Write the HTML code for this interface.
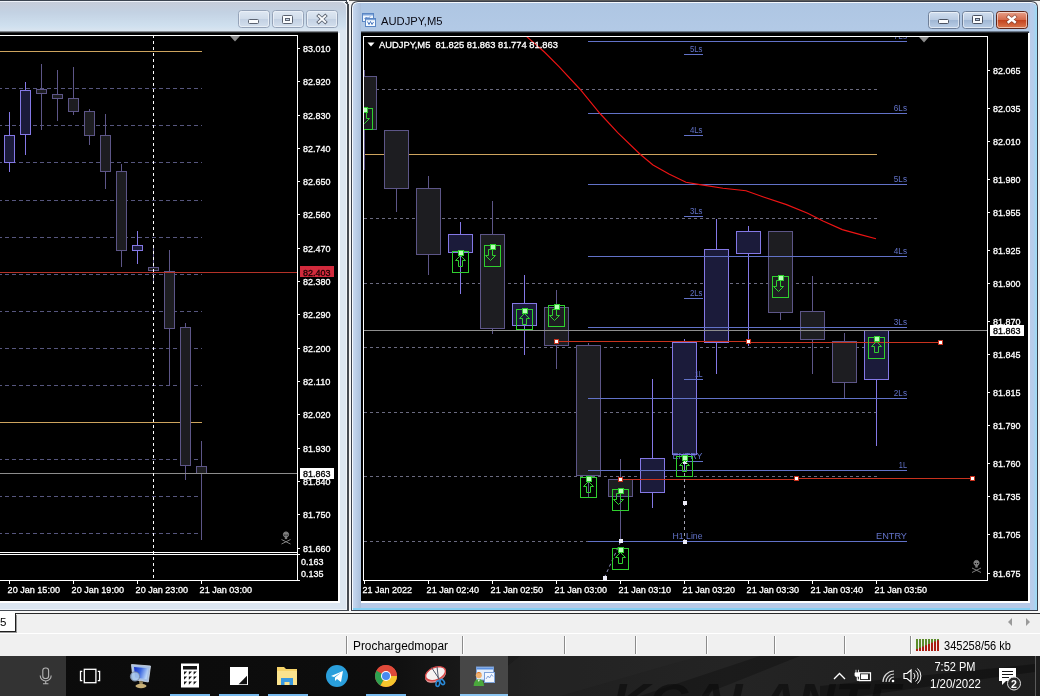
<!DOCTYPE html>
<html><head><meta charset="utf-8"><title>AUDJPY,M5</title>
<style>html,body{margin:0;padding:0;background:#000;overflow:hidden}svg{display:block;will-change:transform}</style></head>
<body>
<svg width="1040" height="696" viewBox="0 0 1040 696" shape-rendering="crispEdges" font-family='"Liberation Sans", sans-serif'>
<defs>
<linearGradient id="tbL" x1="0" y1="0" x2="0" y2="1"><stop offset="0" stop-color="#c6ccd9"/><stop offset="0.35" stop-color="#c3d2e3"/><stop offset="0.8" stop-color="#cfe0ef"/><stop offset="1" stop-color="#dde6f0"/></linearGradient>
<linearGradient id="tbR" x1="0" y1="0" x2="0" y2="1"><stop offset="0" stop-color="#aec6e3"/><stop offset="0.12" stop-color="#bacfea"/><stop offset="0.5" stop-color="#b4cbe8"/><stop offset="1" stop-color="#a8c0e0"/></linearGradient>
<linearGradient id="btnL" x1="0" y1="0" x2="0" y2="1"><stop offset="0" stop-color="#dfe8f3"/><stop offset="0.5" stop-color="#d0dcea"/><stop offset="0.5" stop-color="#c2d0e2"/><stop offset="1" stop-color="#d4e0ee"/></linearGradient>
<linearGradient id="btnR" x1="0" y1="0" x2="0" y2="1"><stop offset="0" stop-color="#d3e0f0"/><stop offset="0.5" stop-color="#b9cbe2"/><stop offset="0.5" stop-color="#9fb6d3"/><stop offset="1" stop-color="#bcd0e8"/></linearGradient>
<linearGradient id="btnX" x1="0" y1="0" x2="0" y2="1"><stop offset="0" stop-color="#e8a48e"/><stop offset="0.5" stop-color="#d4694a"/><stop offset="0.5" stop-color="#c2411c"/><stop offset="1" stop-color="#dc7a50"/></linearGradient>
<linearGradient id="sideR" gradientUnits="userSpaceOnUse" x1="353" y1="0" x2="361" y2="0"><stop offset="0" stop-color="#c6d7ef"/><stop offset="1" stop-color="#aabfdb"/></linearGradient>
<linearGradient id="tbShadow" x1="0" y1="0" x2="0" y2="1"><stop offset="0" stop-color="#000" stop-opacity="0"/><stop offset="1" stop-color="#000" stop-opacity="1"/></linearGradient>
</defs>
<rect x="0" y="0" width="1040" height="614" fill="#f4f4f4" />
<path d="M-10 0 H342 Q349 0 349 7 V611 H-10 Z" fill="#454a52"/>
<path d="M-10 1 H341 Q347 1 347 7 V610 H-10 Z" fill="#eef3f9"/>
<path d="M-10 2 H340 Q346 2 346 8 V609 H-10 Z" fill="#dce6f1"/>
<clipPath id="cl"><path d="M-10 2 H340 Q346 2 346 8 V609 H-10 Z"/></clipPath>
<rect x="-10" y="2" width="357" height="30" fill="url(#tbL)" clip-path="url(#cl)"/>
<rect x="340" y="30" width="6" height="579" fill="#dce6f1" />
<line x1="0" y1="0.5" x2="347" y2="0.5" stroke="#3c4450" stroke-width="1" />
<line x1="0" y1="1.5" x2="346" y2="1.5" stroke="#eef2f9" stroke-width="1" />
<rect x="0" y="30.5" width="338" height="2.5" fill="url(#tbShadow)" shape-rendering="auto"/>
<rect x="-10" y="33" width="350" height="570" fill="#fff" />
<rect x="-10" y="33" width="348" height="568" fill="#000" />
<rect x="238.5" y="10.5" width="31" height="17" rx="3" fill="url(#btnL)" stroke="#95a3b8" shape-rendering="auto"/>
<rect x="239.5" y="11.5" width="29" height="15" rx="2" fill="none" stroke="#eef3f9" stroke-opacity="0.8" shape-rendering="auto"/>
<rect x="272.5" y="10.5" width="31" height="17" rx="3" fill="url(#btnL)" stroke="#95a3b8" shape-rendering="auto"/>
<rect x="273.5" y="11.5" width="29" height="15" rx="2" fill="none" stroke="#eef3f9" stroke-opacity="0.8" shape-rendering="auto"/>
<rect x="306.5" y="10.5" width="31" height="17" rx="3" fill="url(#btnL)" stroke="#95a3b8" shape-rendering="auto"/>
<rect x="307.5" y="11.5" width="29" height="15" rx="2" fill="none" stroke="#eef3f9" stroke-opacity="0.8" shape-rendering="auto"/>
<rect x="248.5" y="19.5" width="10" height="4" rx="1" fill="#fafcfe" stroke="#5a6270" shape-rendering="auto"/>
<rect x="282.5" y="15.5" width="10" height="8" rx="1" fill="#fafcfe" stroke="#5a6270" shape-rendering="auto"/>
<rect x="285.5" y="18.5" width="4" height="2" fill="#c9d6e6" stroke="#5a6270" shape-rendering="auto"/>
<g shape-rendering="auto" stroke-linecap="square"><path d="M318.8 16 l6.4 6 M325.2 16 l-6.4 6" stroke="#5a6270" stroke-width="3.6" fill="none"/><path d="M318.8 16 l6.4 6 M325.2 16 l-6.4 6" stroke="#fafcfe" stroke-width="1.9" fill="none"/></g>
<line x1="0" y1="35.5" x2="298" y2="35.5" stroke="#fff" stroke-width="1" />
<line x1="297.5" y1="35" x2="297.5" y2="581" stroke="#fff" stroke-width="1" />
<line x1="0" y1="552.5" x2="298" y2="552.5" stroke="#fff" stroke-width="1" />
<line x1="0" y1="554.5" x2="298" y2="554.5" stroke="#fff" stroke-width="1" />
<line x1="0" y1="580.5" x2="298" y2="580.5" stroke="#fff" stroke-width="1" />
<line x1="298" y1="554.5" x2="300" y2="554.5" stroke="#fff" stroke-width="1" />
<line x1="298" y1="580.5" x2="300" y2="580.5" stroke="#fff" stroke-width="1" />
<path d="M230 36 h10 l-5 5.5 z" fill="#8c8c8c" shape-rendering="auto"/>
<line x1="0" y1="88.5" x2="202" y2="88.5" stroke="#56567e" stroke-width="1" stroke-dasharray="4 3" stroke-dashoffset="2"/>
<line x1="0" y1="125.5" x2="202" y2="125.5" stroke="#56567e" stroke-width="1" stroke-dasharray="4 3" stroke-dashoffset="2"/>
<line x1="0" y1="162.5" x2="202" y2="162.5" stroke="#56567e" stroke-width="1" stroke-dasharray="4 3" stroke-dashoffset="2"/>
<line x1="0" y1="200.5" x2="202" y2="200.5" stroke="#56567e" stroke-width="1" stroke-dasharray="4 3" stroke-dashoffset="2"/>
<line x1="0" y1="237.5" x2="202" y2="237.5" stroke="#56567e" stroke-width="1" stroke-dasharray="4 3" stroke-dashoffset="2"/>
<line x1="0" y1="274.5" x2="202" y2="274.5" stroke="#56567e" stroke-width="1" stroke-dasharray="4 3" stroke-dashoffset="2"/>
<line x1="0" y1="311.5" x2="202" y2="311.5" stroke="#56567e" stroke-width="1" stroke-dasharray="4 3" stroke-dashoffset="2"/>
<line x1="0" y1="348.5" x2="202" y2="348.5" stroke="#56567e" stroke-width="1" stroke-dasharray="4 3" stroke-dashoffset="2"/>
<line x1="0" y1="385.5" x2="202" y2="385.5" stroke="#56567e" stroke-width="1" stroke-dasharray="4 3" stroke-dashoffset="2"/>
<line x1="0" y1="459.5" x2="202" y2="459.5" stroke="#56567e" stroke-width="1" stroke-dasharray="4 3" stroke-dashoffset="2"/>
<line x1="0" y1="496.5" x2="202" y2="496.5" stroke="#56567e" stroke-width="1" stroke-dasharray="4 3" stroke-dashoffset="2"/>
<line x1="0" y1="533.5" x2="202" y2="533.5" stroke="#56567e" stroke-width="1" stroke-dasharray="4 3" stroke-dashoffset="2"/>
<line x1="0" y1="51.5" x2="202" y2="51.5" stroke="#cda45e" stroke-width="1" />
<line x1="0" y1="422.5" x2="202" y2="422.5" stroke="#cda45e" stroke-width="1" />
<rect x="9.0" y="112" width="1" height="23" fill="#8478e6"/>
<rect x="9.0" y="163" width="1" height="9" fill="#8478e6"/>
<rect x="4.5" y="135.5" width="10.0" height="27" fill="#1b1b3a" stroke="#8478e6"/>
<rect x="25.0" y="82" width="1" height="8" fill="#8478e6"/>
<rect x="25.0" y="135" width="1" height="20" fill="#8478e6"/>
<rect x="20.5" y="90.5" width="10.0" height="44" fill="#1b1b3a" stroke="#8478e6"/>
<rect x="41.0" y="64" width="1" height="25" fill="#5d5688"/>
<rect x="41.0" y="94" width="1" height="36" fill="#5d5688"/>
<rect x="36.5" y="89.5" width="10.0" height="4" fill="#1d1d21" stroke="#5d5688"/>
<rect x="57.0" y="70" width="1" height="24" fill="#5d5688"/>
<rect x="57.0" y="99" width="1" height="22" fill="#5d5688"/>
<rect x="52.5" y="94.5" width="10.0" height="4" fill="#1d1d21" stroke="#5d5688"/>
<rect x="73.0" y="67" width="1" height="31" fill="#5d5688"/>
<rect x="73.0" y="112" width="1" height="3" fill="#5d5688"/>
<rect x="68.5" y="98.5" width="10.0" height="13" fill="#1d1d21" stroke="#5d5688"/>
<rect x="89.0" y="109" width="1" height="2" fill="#5d5688"/>
<rect x="89.0" y="136" width="1" height="9" fill="#5d5688"/>
<rect x="84.5" y="111.5" width="10.0" height="24" fill="#1d1d21" stroke="#5d5688"/>
<rect x="105.0" y="114" width="1" height="21" fill="#5d5688"/>
<rect x="105.0" y="172" width="1" height="17" fill="#5d5688"/>
<rect x="100.5" y="135.5" width="10.0" height="36" fill="#1d1d21" stroke="#5d5688"/>
<rect x="121.0" y="164" width="1" height="7" fill="#5d5688"/>
<rect x="121.0" y="251" width="1" height="16" fill="#5d5688"/>
<rect x="116.5" y="171.5" width="10.0" height="79" fill="#1d1d21" stroke="#5d5688"/>
<rect x="137.0" y="231" width="1" height="14" fill="#8478e6"/>
<rect x="137.0" y="251" width="1" height="13" fill="#8478e6"/>
<rect x="132.5" y="245.5" width="10.0" height="5" fill="#1b1b3a" stroke="#8478e6"/>
<rect x="153.0" y="245" width="1" height="22" fill="#5d5688"/>
<rect x="153.0" y="271" width="1" height="13" fill="#5d5688"/>
<rect x="148.5" y="267.5" width="10.0" height="3" fill="#1d1d21" stroke="#5d5688"/>
<rect x="169.0" y="250" width="1" height="21" fill="#5d5688"/>
<rect x="169.0" y="329" width="1" height="57" fill="#5d5688"/>
<rect x="164.5" y="271.5" width="10.0" height="57" fill="#1d1d21" stroke="#5d5688"/>
<rect x="185.0" y="323" width="1" height="4" fill="#5d5688"/>
<rect x="185.0" y="466" width="1" height="14" fill="#5d5688"/>
<rect x="180.5" y="327.5" width="10.0" height="138" fill="#1d1d21" stroke="#5d5688"/>
<rect x="201.0" y="441" width="1" height="25" fill="#5d5688"/>
<rect x="201.0" y="474" width="1" height="66" fill="#5d5688"/>
<rect x="196.5" y="466.5" width="10.0" height="7" fill="#1d1d21" stroke="#5d5688"/>
<line x1="0" y1="272.5" x2="297" y2="272.5" stroke="#b43228" stroke-width="1" />
<line x1="0" y1="473.5" x2="297" y2="473.5" stroke="#8c8c8c" stroke-width="1" />
<line x1="153.5" y1="35" x2="153.5" y2="580" stroke="#fff" stroke-width="1" stroke-dasharray="3 3"/>
<line x1="298" y1="48.5" x2="300" y2="48.5" stroke="#fff" stroke-width="1" />
<text x="303" y="51.5" font-size="9.2" fill="#fff" text-anchor="start" textLength="27.5" lengthAdjust="spacingAndGlyphs"  stroke="#fff" stroke-width="0.3">83.010</text>
<line x1="298" y1="81.5" x2="300" y2="81.5" stroke="#fff" stroke-width="1" />
<text x="303" y="84.5" font-size="9.2" fill="#fff" text-anchor="start" textLength="27.5" lengthAdjust="spacingAndGlyphs"  stroke="#fff" stroke-width="0.3">82.920</text>
<line x1="298" y1="115.5" x2="300" y2="115.5" stroke="#fff" stroke-width="1" />
<text x="303" y="118.5" font-size="9.2" fill="#fff" text-anchor="start" textLength="27.5" lengthAdjust="spacingAndGlyphs"  stroke="#fff" stroke-width="0.3">82.830</text>
<line x1="298" y1="148.5" x2="300" y2="148.5" stroke="#fff" stroke-width="1" />
<text x="303" y="151.5" font-size="9.2" fill="#fff" text-anchor="start" textLength="27.5" lengthAdjust="spacingAndGlyphs"  stroke="#fff" stroke-width="0.3">82.740</text>
<line x1="298" y1="181.5" x2="300" y2="181.5" stroke="#fff" stroke-width="1" />
<text x="303" y="184.5" font-size="9.2" fill="#fff" text-anchor="start" textLength="27.5" lengthAdjust="spacingAndGlyphs"  stroke="#fff" stroke-width="0.3">82.650</text>
<line x1="298" y1="214.5" x2="300" y2="214.5" stroke="#fff" stroke-width="1" />
<text x="303" y="217.5" font-size="9.2" fill="#fff" text-anchor="start" textLength="27.5" lengthAdjust="spacingAndGlyphs"  stroke="#fff" stroke-width="0.3">82.560</text>
<line x1="298" y1="248.5" x2="300" y2="248.5" stroke="#fff" stroke-width="1" />
<text x="303" y="251.5" font-size="9.2" fill="#fff" text-anchor="start" textLength="27.5" lengthAdjust="spacingAndGlyphs"  stroke="#fff" stroke-width="0.3">82.470</text>
<line x1="298" y1="281.5" x2="300" y2="281.5" stroke="#fff" stroke-width="1" />
<text x="303" y="284.5" font-size="9.2" fill="#fff" text-anchor="start" textLength="27.5" lengthAdjust="spacingAndGlyphs"  stroke="#fff" stroke-width="0.3">82.380</text>
<line x1="298" y1="314.5" x2="300" y2="314.5" stroke="#fff" stroke-width="1" />
<text x="303" y="317.5" font-size="9.2" fill="#fff" text-anchor="start" textLength="27.5" lengthAdjust="spacingAndGlyphs"  stroke="#fff" stroke-width="0.3">82.290</text>
<line x1="298" y1="348.5" x2="300" y2="348.5" stroke="#fff" stroke-width="1" />
<text x="303" y="351.5" font-size="9.2" fill="#fff" text-anchor="start" textLength="27.5" lengthAdjust="spacingAndGlyphs"  stroke="#fff" stroke-width="0.3">82.200</text>
<line x1="298" y1="381.5" x2="300" y2="381.5" stroke="#fff" stroke-width="1" />
<text x="303" y="384.5" font-size="9.2" fill="#fff" text-anchor="start" textLength="27.5" lengthAdjust="spacingAndGlyphs"  stroke="#fff" stroke-width="0.3">82.110</text>
<line x1="298" y1="414.5" x2="300" y2="414.5" stroke="#fff" stroke-width="1" />
<text x="303" y="417.5" font-size="9.2" fill="#fff" text-anchor="start" textLength="27.5" lengthAdjust="spacingAndGlyphs"  stroke="#fff" stroke-width="0.3">82.020</text>
<line x1="298" y1="448.5" x2="300" y2="448.5" stroke="#fff" stroke-width="1" />
<text x="303" y="451.5" font-size="9.2" fill="#fff" text-anchor="start" textLength="27.5" lengthAdjust="spacingAndGlyphs"  stroke="#fff" stroke-width="0.3">81.930</text>
<line x1="298" y1="481.5" x2="300" y2="481.5" stroke="#fff" stroke-width="1" />
<text x="303" y="484.5" font-size="9.2" fill="#fff" text-anchor="start" textLength="27.5" lengthAdjust="spacingAndGlyphs"  stroke="#fff" stroke-width="0.3">81.840</text>
<line x1="298" y1="514.5" x2="300" y2="514.5" stroke="#fff" stroke-width="1" />
<text x="303" y="517.5" font-size="9.2" fill="#fff" text-anchor="start" textLength="27.5" lengthAdjust="spacingAndGlyphs"  stroke="#fff" stroke-width="0.3">81.750</text>
<line x1="298" y1="548.5" x2="300" y2="548.5" stroke="#fff" stroke-width="1" />
<text x="303" y="551.5" font-size="9.2" fill="#fff" text-anchor="start" textLength="27.5" lengthAdjust="spacingAndGlyphs"  stroke="#fff" stroke-width="0.3">81.660</text>
<rect x="300" y="266" width="34" height="11" fill="#d22a3c" />
<text x="303" y="275.5" font-size="9.2" fill="#1a0000" text-anchor="start" textLength="27.5" lengthAdjust="spacingAndGlyphs"  stroke="#1a0000" stroke-width="0.3">82.403</text>
<rect x="300" y="468" width="34" height="11" fill="#fff" />
<text x="303" y="476.5" font-size="9.2" fill="#000" text-anchor="start" textLength="27.5" lengthAdjust="spacingAndGlyphs"  stroke="#000" stroke-width="0.3">81.863</text>
<text x="301" y="565" font-size="9.2" fill="#fff" text-anchor="start" textLength="22.5" lengthAdjust="spacingAndGlyphs"  stroke="#fff" stroke-width="0.3">0.163</text>
<text x="301" y="577" font-size="9.2" fill="#fff" text-anchor="start" textLength="22.5" lengthAdjust="spacingAndGlyphs"  stroke="#fff" stroke-width="0.3">0.135</text>
<line x1="9.5" y1="580" x2="9.5" y2="584" stroke="#fff" stroke-width="1" />
<text x="7.6" y="593" font-size="9.2" fill="#fff" text-anchor="start" textLength="52.4" lengthAdjust="spacingAndGlyphs"  stroke="#fff" stroke-width="0.3">20 Jan 15:00</text>
<line x1="73.5" y1="580" x2="73.5" y2="584" stroke="#fff" stroke-width="1" />
<text x="71.6" y="593" font-size="9.2" fill="#fff" text-anchor="start" textLength="52.4" lengthAdjust="spacingAndGlyphs"  stroke="#fff" stroke-width="0.3">20 Jan 19:00</text>
<line x1="137.5" y1="580" x2="137.5" y2="584" stroke="#fff" stroke-width="1" />
<text x="135.6" y="593" font-size="9.2" fill="#fff" text-anchor="start" textLength="52.4" lengthAdjust="spacingAndGlyphs"  stroke="#fff" stroke-width="0.3">20 Jan 23:00</text>
<line x1="201.5" y1="580" x2="201.5" y2="584" stroke="#fff" stroke-width="1" />
<text x="199.6" y="593" font-size="9.2" fill="#fff" text-anchor="start" textLength="52.4" lengthAdjust="spacingAndGlyphs"  stroke="#fff" stroke-width="0.3">21 Jan 03:00</text>
<g fill="none" stroke="#7e7e7e" shape-rendering="auto"><circle cx="286.0" cy="534.5" r="2.6" fill="#7e7e7e"/><rect x="284.8" y="536.5" width="2.4" height="2.6" fill="#7e7e7e" stroke="none"/><path d="M281.5 539.5 l9 4.5 M290.5 539.5 l-9 4.5"/></g>
<circle cx="284.9" cy="535.1" r="0.7" fill="#000" shape-rendering="auto"/><circle cx="287.1" cy="535.1" r="0.7" fill="#000" shape-rendering="auto"/>
<line x1="349" y1="0.5" x2="1040" y2="0.5" stroke="#5a5a5a" stroke-width="1" />
<path d="M351 611 V8 Q351 1 358 1 H1031 Q1038 1 1038 8 V611 Z" fill="#3a3f4a" shape-rendering="auto"/>
<path d="M352 610 V8 Q352 2 358 2 H1031 Q1037 2 1037 8 V610 Z" fill="#f4f8fd" shape-rendering="auto"/>
<path d="M353 610 V9 Q353 3 359 3 H1030 Q1037 3 1037 9 V610 Z" fill="url(#tbR)" shape-rendering="auto"/>
<rect x="353" y="32" width="684" height="578" fill="#b6c9e7" />
<clipPath id="cw"><path d="M353 610 V9 Q353 3 359 3 H1030 Q1037 3 1037 9 V610 Z"/></clipPath>
<rect x="353" y="2" width="8" height="608" fill="url(#sideR)" clip-path="url(#cw)"/>
<rect x="353" y="608" width="684" height="2" fill="#86d0f4" />
<linearGradient id="sideRR" gradientUnits="userSpaceOnUse" x1="1030" y1="0" x2="1037" y2="0"><stop offset="0" stop-color="#b9cbe9"/><stop offset="0.5" stop-color="#b4cdec"/><stop offset="1" stop-color="#9adcf6"/></linearGradient>
<rect x="1030" y="2" width="7" height="608" fill="url(#sideRR)" clip-path="url(#cw)"/>
<rect x="361" y="30.5" width="668" height="2.5" fill="url(#tbShadow)" shape-rendering="auto"/>
<rect x="361" y="33" width="669" height="570" fill="#fff" />
<rect x="361" y="33" width="667" height="568" fill="#000" />
<line x1="1037" y1="611.5" x2="1040" y2="611.5" stroke="#f4f4f4" stroke-width="1" />
<rect x="928.5" y="11.5" width="31" height="17" rx="3" fill="url(#btnR)" stroke="#6e7f98" shape-rendering="auto"/>
<rect x="929.5" y="12.5" width="29" height="15" rx="2" fill="none" stroke="#fff" stroke-opacity="0.55" shape-rendering="auto"/>
<rect x="962.5" y="11.5" width="31" height="17" rx="3" fill="url(#btnR)" stroke="#6e7f98" shape-rendering="auto"/>
<rect x="963.5" y="12.5" width="29" height="15" rx="2" fill="none" stroke="#fff" stroke-opacity="0.55" shape-rendering="auto"/>
<rect x="996.5" y="11.5" width="31" height="17" rx="3" fill="url(#btnX)" stroke="#5c2418" shape-rendering="auto"/>
<rect x="997.5" y="12.5" width="29" height="15" rx="2" fill="none" stroke="#fff" stroke-opacity="0.55" shape-rendering="auto"/>
<rect x="938.5" y="19.5" width="10" height="4" rx="1" fill="#fafcfe" stroke="#4a5262" shape-rendering="auto"/>
<rect x="972.5" y="15.5" width="10" height="8" rx="1" fill="#fafcfe" stroke="#4a5262" shape-rendering="auto"/>
<rect x="975.5" y="18.5" width="4" height="2" fill="#b9cbe2" stroke="#4a5262" shape-rendering="auto"/>
<g shape-rendering="auto" stroke-linecap="square"><path d="M1008.6 17 l6.2 5 M1014.8 17 l-6.2 5" stroke="#7a3a2c" stroke-opacity="0.7" stroke-width="3.8" fill="none"/><path d="M1008.6 17 l6.2 5 M1014.8 17 l-6.2 5" stroke="#fff" stroke-width="2.4" fill="none"/></g>
<g shape-rendering="auto"><rect x="362.5" y="13.5" width="11" height="8" fill="#eef6ff" stroke="#5a86c4"/><rect x="363" y="14" width="10" height="1.5" fill="#7ea4d8"/><path d="M364.5 19 l2 -2 l1.5 1.5 l2 -2" stroke="#4a78c0" fill="none"/><rect x="365.5" y="18.5" width="10" height="8" fill="#f4faff" stroke="#5a86c4"/><rect x="366" y="19" width="9" height="1.2" fill="#7ea4d8"/><path d="M367.5 21.5 l1.5 3 l1.5 -3 l1.5 3 l1.5 -2.5" stroke="#4a78c0" fill="none"/></g>
<text x="381" y="24.5" font-size="11.3" fill="#0a0a14" text-anchor="start" textLength="61.5" lengthAdjust="spacingAndGlyphs" >AUDJPY,M5</text>
<line x1="363" y1="36.5" x2="988" y2="36.5" stroke="#fff" stroke-width="1" />
<line x1="363.5" y1="36" x2="363.5" y2="581" stroke="#fff" stroke-width="1" />
<line x1="987.5" y1="36" x2="987.5" y2="581" stroke="#fff" stroke-width="1" />
<line x1="363" y1="580.5" x2="988" y2="580.5" stroke="#fff" stroke-width="1" />
<path d="M919 37 h10 l-5 5.5 z" fill="#8c8c8c" shape-rendering="auto"/>
<line x1="364" y1="89.5" x2="877" y2="89.5" stroke="#6a6a80" stroke-width="1" stroke-dasharray="3 3"/>
<line x1="364" y1="218.5" x2="877" y2="218.5" stroke="#6a6a80" stroke-width="1" stroke-dasharray="3 3"/>
<line x1="364" y1="283.5" x2="877" y2="283.5" stroke="#6a6a80" stroke-width="1" stroke-dasharray="3 3"/>
<line x1="364" y1="347.5" x2="877" y2="347.5" stroke="#6a6a80" stroke-width="1" stroke-dasharray="3 3"/>
<line x1="364" y1="412.5" x2="877" y2="412.5" stroke="#6a6a80" stroke-width="1" stroke-dasharray="3 3"/>
<line x1="364" y1="476.5" x2="877" y2="476.5" stroke="#6a6a80" stroke-width="1" stroke-dasharray="3 3"/>
<line x1="364" y1="541.5" x2="877" y2="541.5" stroke="#6a6a80" stroke-width="1" stroke-dasharray="3 3"/>
<line x1="364" y1="154.5" x2="877" y2="154.5" stroke="#cda45e" stroke-width="1" />
<clipPath id="cr"><rect x="364" y="37" width="623" height="543"/></clipPath><g clip-path="url(#cr)">
<rect x="364.0" y="70" width="1" height="6" fill="#5d5688"/>
<rect x="364.0" y="130" width="1" height="40" fill="#5d5688"/>
<rect x="352.5" y="76.5" width="24.0" height="53" fill="#1d1d21" stroke="#5d5688"/>
<rect x="396.0" y="189" width="1" height="23" fill="#5d5688"/>
<rect x="384.5" y="130.5" width="24.0" height="58" fill="#1d1d21" stroke="#5d5688"/>
<rect x="428.0" y="176" width="1" height="12" fill="#5d5688"/>
<rect x="428.0" y="255" width="1" height="20" fill="#5d5688"/>
<rect x="416.5" y="188.5" width="24.0" height="66" fill="#1d1d21" stroke="#5d5688"/>
<rect x="460.0" y="222" width="1" height="12" fill="#8478e6"/>
<rect x="460.0" y="253" width="1" height="41" fill="#8478e6"/>
<rect x="448.5" y="234.5" width="24.0" height="18" fill="#1b1b3a" stroke="#8478e6"/>
<rect x="492.0" y="201" width="1" height="33" fill="#5d5688"/>
<rect x="492.0" y="329" width="1" height="5" fill="#5d5688"/>
<rect x="480.5" y="234.5" width="24.0" height="94" fill="#1d1d21" stroke="#5d5688"/>
<rect x="524.0" y="275" width="1" height="28" fill="#8478e6"/>
<rect x="524.0" y="326" width="1" height="29" fill="#8478e6"/>
<rect x="512.5" y="303.5" width="24.0" height="22" fill="#1b1b3a" stroke="#8478e6"/>
<rect x="556.0" y="290" width="1" height="17" fill="#5d5688"/>
<rect x="556.0" y="346" width="1" height="23" fill="#5d5688"/>
<rect x="544.5" y="307.5" width="24.0" height="38" fill="#1d1d21" stroke="#5d5688"/>
<rect x="588.0" y="343" width="1" height="2" fill="#5d5688"/>
<rect x="588.0" y="476" width="1" height="21" fill="#5d5688"/>
<rect x="576.5" y="345.5" width="24.0" height="130" fill="#1d1d21" stroke="#5d5688"/>
<rect x="620.0" y="459" width="1" height="20" fill="#5d5688"/>
<rect x="620.0" y="497" width="1" height="44" fill="#5d5688"/>
<rect x="608.5" y="479.5" width="24.0" height="17" fill="#1d1d21" stroke="#5d5688"/>
<rect x="652.0" y="379" width="1" height="79" fill="#8478e6"/>
<rect x="652.0" y="493" width="1" height="15" fill="#8478e6"/>
<rect x="640.5" y="458.5" width="24.0" height="34" fill="#1b1b3a" stroke="#8478e6"/>
<rect x="684.0" y="339" width="1" height="3" fill="#8478e6"/>
<rect x="684.0" y="455" width="1" height="15" fill="#8478e6"/>
<rect x="672.5" y="342.5" width="24.0" height="112" fill="#1b1b3a" stroke="#8478e6"/>
<rect x="716.0" y="219" width="1" height="30" fill="#8478e6"/>
<rect x="716.0" y="343" width="1" height="31" fill="#8478e6"/>
<rect x="704.5" y="249.5" width="24.0" height="93" fill="#1b1b3a" stroke="#8478e6"/>
<rect x="748.0" y="226" width="1" height="5" fill="#8478e6"/>
<rect x="748.0" y="254" width="1" height="92" fill="#8478e6"/>
<rect x="736.5" y="231.5" width="24.0" height="22" fill="#1b1b3a" stroke="#8478e6"/>
<rect x="780.0" y="313" width="1" height="7" fill="#5d5688"/>
<rect x="768.5" y="231.5" width="24.0" height="81" fill="#1d1d21" stroke="#5d5688"/>
<rect x="812.0" y="276" width="1" height="35" fill="#5d5688"/>
<rect x="812.0" y="340" width="1" height="34" fill="#5d5688"/>
<rect x="800.5" y="311.5" width="24.0" height="28" fill="#1d1d21" stroke="#5d5688"/>
<rect x="844.0" y="333" width="1" height="8" fill="#5d5688"/>
<rect x="844.0" y="383" width="1" height="15" fill="#5d5688"/>
<rect x="832.5" y="341.5" width="24.0" height="41" fill="#1d1d21" stroke="#5d5688"/>
<rect x="876.0" y="380" width="1" height="66" fill="#8478e6"/>
<rect x="864.5" y="330.5" width="24.0" height="49" fill="#1b1b3a" stroke="#8478e6"/>
<line x1="588" y1="41.5" x2="907" y2="41.5" stroke="#6272c8" stroke-width="1" />
<line x1="588" y1="113.5" x2="907" y2="113.5" stroke="#6272c8" stroke-width="1" />
<line x1="588" y1="184.5" x2="907" y2="184.5" stroke="#6272c8" stroke-width="1" />
<line x1="588" y1="256.5" x2="907" y2="256.5" stroke="#6272c8" stroke-width="1" />
<line x1="588" y1="327.5" x2="907" y2="327.5" stroke="#6272c8" stroke-width="1" />
<line x1="588" y1="398.5" x2="907" y2="398.5" stroke="#6272c8" stroke-width="1" />
<line x1="588" y1="470.5" x2="907" y2="470.5" stroke="#6272c8" stroke-width="1" />
<line x1="588" y1="541.5" x2="907" y2="541.5" stroke="#6272c8" stroke-width="1" />
<line x1="684" y1="54.5" x2="703" y2="54.5" stroke="#6272c8" stroke-width="1" />
<text x="689.9" y="52" font-size="9.2" fill="#6272c8" text-anchor="start" textLength="12.6" lengthAdjust="spacingAndGlyphs" stroke="none">5Ls</text>
<line x1="684" y1="135.5" x2="703" y2="135.5" stroke="#6272c8" stroke-width="1" />
<text x="689.9" y="133" font-size="9.2" fill="#6272c8" text-anchor="start" textLength="12.6" lengthAdjust="spacingAndGlyphs" stroke="none">4Ls</text>
<line x1="684" y1="216.5" x2="703" y2="216.5" stroke="#6272c8" stroke-width="1" />
<text x="689.9" y="214" font-size="9.2" fill="#6272c8" text-anchor="start" textLength="12.6" lengthAdjust="spacingAndGlyphs" stroke="none">3Ls</text>
<line x1="684" y1="298.5" x2="703" y2="298.5" stroke="#6272c8" stroke-width="1" />
<text x="689.9" y="296" font-size="9.2" fill="#6272c8" text-anchor="start" textLength="12.6" lengthAdjust="spacingAndGlyphs" stroke="none">2Ls</text>
<line x1="684" y1="379.5" x2="703" y2="379.5" stroke="#6272c8" stroke-width="1" />
<text x="694.9" y="377" font-size="9.2" fill="#6272c8" text-anchor="start" textLength="7.6" lengthAdjust="spacingAndGlyphs" stroke="none">1L</text>
<line x1="684" y1="461.5" x2="703" y2="461.5" stroke="#6272c8" stroke-width="1" />
<text x="672.5" y="459" font-size="9.2" fill="#6272c8" text-anchor="start" textLength="30" lengthAdjust="spacingAndGlyphs" stroke="none">ENTRY</text>
<line x1="684" y1="541.5" x2="703" y2="541.5" stroke="#6272c8" stroke-width="1" />
<text x="672.5" y="539" font-size="9.2" fill="#6272c8" text-anchor="start" textLength="30" lengthAdjust="spacingAndGlyphs" stroke="none">H1 Line</text>
<text x="893.8" y="39" font-size="9.2" fill="#6272c8" text-anchor="start" textLength="13.2" lengthAdjust="spacingAndGlyphs" stroke="none">7Ls</text>
<text x="893.8" y="111" font-size="9.2" fill="#6272c8" text-anchor="start" textLength="13.2" lengthAdjust="spacingAndGlyphs" stroke="none">6Ls</text>
<text x="893.8" y="182" font-size="9.2" fill="#6272c8" text-anchor="start" textLength="13.2" lengthAdjust="spacingAndGlyphs" stroke="none">5Ls</text>
<text x="893.8" y="254" font-size="9.2" fill="#6272c8" text-anchor="start" textLength="13.2" lengthAdjust="spacingAndGlyphs" stroke="none">4Ls</text>
<text x="893.8" y="325" font-size="9.2" fill="#6272c8" text-anchor="start" textLength="13.2" lengthAdjust="spacingAndGlyphs" stroke="none">3Ls</text>
<text x="893.8" y="396" font-size="9.2" fill="#6272c8" text-anchor="start" textLength="13.2" lengthAdjust="spacingAndGlyphs" stroke="none">2Ls</text>
<text x="898.8" y="468" font-size="9.2" fill="#6272c8" text-anchor="start" textLength="8.2" lengthAdjust="spacingAndGlyphs" stroke="none">1L</text>
<text x="876" y="539" font-size="9.2" fill="#6272c8" text-anchor="start" textLength="31" lengthAdjust="spacingAndGlyphs" stroke="none">ENTRY</text>
</g>
<line x1="364" y1="330.5" x2="987" y2="330.5" stroke="#8e8e8e" stroke-width="1" />
<g clip-path="url(#cr)">
<polyline fill="none" stroke="#ee1414" stroke-width="1.15" shape-rendering="auto" points="526,36 544.4,52 559,66.6 579.8,89 600,113.5 617.7,132.6 640.4,154.5 653,165 669,174 686,182.3 700,184.6 723,188.3 746,190.8 763.5,197 786.5,204.6 807.7,213.3 823,221 842.3,229.6 859.6,234.4 876,238.8"/>
<line x1="556" y1="341.5" x2="748" y2="341.5" stroke="#c8321e" stroke-width="1" />
<line x1="748" y1="342.5" x2="940" y2="342.5" stroke="#c8321e" stroke-width="1" />
<line x1="620" y1="479.5" x2="796" y2="479.5" stroke="#c8321e" stroke-width="1" />
<line x1="796" y1="478.5" x2="972" y2="478.5" stroke="#c8321e" stroke-width="1" />
<rect x="554.5" y="339.5" width="4" height="4" fill="#fff" stroke="#c8321e" />
<rect x="746.5" y="339.5" width="4" height="4" fill="#fff" stroke="#c8321e" />
<rect x="938.5" y="340.5" width="4" height="4" fill="#fff" stroke="#c8321e" />
<rect x="618.5" y="477.5" width="4" height="4" fill="#fff" stroke="#c8321e" />
<rect x="794.5" y="476.5" width="4" height="4" fill="#fff" stroke="#c8321e" />
<rect x="970.5" y="476.5" width="4" height="4" fill="#fff" stroke="#c8321e" />
<line x1="684.5" y1="461" x2="684.5" y2="541" stroke="#a4a4b4" stroke-width="1" stroke-dasharray="3 3"/>
<line x1="604.5" y1="577.5" x2="620.5" y2="542" stroke="#9090c0" stroke-dasharray="3 3" shape-rendering="auto"/>
<rect x="683" y="501" width="4" height="4" fill="#ececf8" />
<rect x="683" y="540" width="4" height="4" fill="#ececf8" />
<rect x="619" y="539" width="4" height="4" fill="#ececf8" />
<rect x="603" y="576" width="4" height="4" fill="#ececf8" />
<rect x="683" y="460" width="4" height="4" fill="#ececf8" />
<rect x="356.5" y="108.5" width="16" height="21" fill="none" stroke="#2fd02f"/>
<path d="M364.5 123.5 l5 -5 h-3 v-6 h-4 v6 h-3 z" fill="none" stroke="#2fd02f" stroke-width="1" shape-rendering="auto"/>
<rect x="362.0" y="107" width="5" height="5" fill="#b8ffb8" stroke="#2fd02f" stroke-width="1"/>
<rect x="452.5" y="251.5" width="16" height="21" fill="none" stroke="#2fd02f"/>
<path d="M460.5 255.5 l5 5 h-3 v6 h-4 v-6 h-3 z" fill="none" stroke="#2fd02f" stroke-width="1" shape-rendering="auto"/>
<rect x="458.0" y="250" width="5" height="5" fill="#b8ffb8" stroke="#2fd02f" stroke-width="1"/>
<rect x="484.5" y="245.5" width="16" height="21" fill="none" stroke="#2fd02f"/>
<path d="M490.5 260.5 l5 -5 h-3 v-6 h-4 v6 h-3 z" fill="none" stroke="#2fd02f" stroke-width="1" shape-rendering="auto"/>
<rect x="490.0" y="244" width="5" height="5" fill="#b8ffb8" stroke="#2fd02f" stroke-width="1"/>
<rect x="516.5" y="309.5" width="16" height="20" fill="none" stroke="#2fd02f"/>
<path d="M524.5 313.5 l5 5 h-3 v6 h-4 v-6 h-3 z" fill="none" stroke="#2fd02f" stroke-width="1" shape-rendering="auto"/>
<rect x="522.0" y="308" width="5" height="5" fill="#b8ffb8" stroke="#2fd02f" stroke-width="1"/>
<rect x="548.5" y="305.5" width="16" height="21" fill="none" stroke="#2fd02f"/>
<path d="M554.5 320.5 l5 -5 h-3 v-6 h-4 v6 h-3 z" fill="none" stroke="#2fd02f" stroke-width="1" shape-rendering="auto"/>
<rect x="554.0" y="304" width="5" height="5" fill="#b8ffb8" stroke="#2fd02f" stroke-width="1"/>
<rect x="580.5" y="477.5" width="16" height="20" fill="none" stroke="#2fd02f"/>
<path d="M588.5 481.5 l5 5 h-3 v6 h-4 v-6 h-3 z" fill="none" stroke="#2fd02f" stroke-width="1" shape-rendering="auto"/>
<rect x="586.0" y="476" width="5" height="5" fill="#b8ffb8" stroke="#2fd02f" stroke-width="1"/>
<rect x="612.5" y="489.5" width="16" height="21" fill="none" stroke="#2fd02f"/>
<path d="M618.5 504.5 l5 -5 h-3 v-6 h-4 v6 h-3 z" fill="none" stroke="#2fd02f" stroke-width="1" shape-rendering="auto"/>
<rect x="618.0" y="488" width="5" height="5" fill="#b8ffb8" stroke="#2fd02f" stroke-width="1"/>
<rect x="612.5" y="548.5" width="16" height="21" fill="none" stroke="#2fd02f"/>
<path d="M620.5 552.5 l5 5 h-3 v6 h-4 v-6 h-3 z" fill="none" stroke="#2fd02f" stroke-width="1" shape-rendering="auto"/>
<rect x="618.0" y="547" width="5" height="5" fill="#b8ffb8" stroke="#2fd02f" stroke-width="1"/>
<rect x="676.5" y="456.5" width="16" height="20" fill="none" stroke="#2fd02f"/>
<path d="M684.5 460.5 l5 5 h-3 v6 h-4 v-6 h-3 z" fill="none" stroke="#2fd02f" stroke-width="1" shape-rendering="auto"/>
<rect x="682.0" y="455" width="5" height="5" fill="#b8ffb8" stroke="#2fd02f" stroke-width="1"/>
<rect x="772.5" y="276.5" width="16" height="21" fill="none" stroke="#2fd02f"/>
<path d="M778.5 291.5 l5 -5 h-3 v-6 h-4 v6 h-3 z" fill="none" stroke="#2fd02f" stroke-width="1" shape-rendering="auto"/>
<rect x="778.0" y="275" width="5" height="5" fill="#b8ffb8" stroke="#2fd02f" stroke-width="1"/>
<rect x="868.5" y="337.5" width="16" height="21" fill="none" stroke="#2fd02f"/>
<path d="M876.5 341.5 l5 5 h-3 v6 h-4 v-6 h-3 z" fill="none" stroke="#2fd02f" stroke-width="1" shape-rendering="auto"/>
<rect x="874.0" y="336" width="5" height="5" fill="#b8ffb8" stroke="#2fd02f" stroke-width="1"/>
</g>
<path d="M367.5 42.5 h7 l-3.5 4 z" fill="#fff" shape-rendering="auto"/>
<text x="379" y="48" font-size="9.2" fill="#fff" text-anchor="start" textLength="179" lengthAdjust="spacingAndGlyphs"  stroke="#fff" stroke-width="0.3">AUDJPY,M5&#160;&#160;81.825 81.863 81.774 81.863</text>
<line x1="988" y1="70.5" x2="990" y2="70.5" stroke="#fff" stroke-width="1" />
<text x="993" y="73.5" font-size="9.2" fill="#fff" text-anchor="start" textLength="27.5" lengthAdjust="spacingAndGlyphs"  stroke="#fff" stroke-width="0.3">82.065</text>
<line x1="988" y1="108.5" x2="990" y2="108.5" stroke="#fff" stroke-width="1" />
<text x="993" y="111.5" font-size="9.2" fill="#fff" text-anchor="start" textLength="27.5" lengthAdjust="spacingAndGlyphs"  stroke="#fff" stroke-width="0.3">82.035</text>
<line x1="988" y1="141.5" x2="990" y2="141.5" stroke="#fff" stroke-width="1" />
<text x="993" y="144.5" font-size="9.2" fill="#fff" text-anchor="start" textLength="27.5" lengthAdjust="spacingAndGlyphs"  stroke="#fff" stroke-width="0.3">82.010</text>
<line x1="988" y1="179.5" x2="990" y2="179.5" stroke="#fff" stroke-width="1" />
<text x="993" y="182.5" font-size="9.2" fill="#fff" text-anchor="start" textLength="27.5" lengthAdjust="spacingAndGlyphs"  stroke="#fff" stroke-width="0.3">81.980</text>
<line x1="988" y1="212.5" x2="990" y2="212.5" stroke="#fff" stroke-width="1" />
<text x="993" y="215.5" font-size="9.2" fill="#fff" text-anchor="start" textLength="27.5" lengthAdjust="spacingAndGlyphs"  stroke="#fff" stroke-width="0.3">81.955</text>
<line x1="988" y1="250.5" x2="990" y2="250.5" stroke="#fff" stroke-width="1" />
<text x="993" y="253.5" font-size="9.2" fill="#fff" text-anchor="start" textLength="27.5" lengthAdjust="spacingAndGlyphs"  stroke="#fff" stroke-width="0.3">81.925</text>
<line x1="988" y1="283.5" x2="990" y2="283.5" stroke="#fff" stroke-width="1" />
<text x="993" y="286.5" font-size="9.2" fill="#fff" text-anchor="start" textLength="27.5" lengthAdjust="spacingAndGlyphs"  stroke="#fff" stroke-width="0.3">81.900</text>
<line x1="988" y1="321.5" x2="990" y2="321.5" stroke="#fff" stroke-width="1" />
<text x="993" y="324.5" font-size="9.2" fill="#fff" text-anchor="start" textLength="27.5" lengthAdjust="spacingAndGlyphs"  stroke="#fff" stroke-width="0.3">81.870</text>
<line x1="988" y1="354.5" x2="990" y2="354.5" stroke="#fff" stroke-width="1" />
<text x="993" y="357.5" font-size="9.2" fill="#fff" text-anchor="start" textLength="27.5" lengthAdjust="spacingAndGlyphs"  stroke="#fff" stroke-width="0.3">81.845</text>
<line x1="988" y1="392.5" x2="990" y2="392.5" stroke="#fff" stroke-width="1" />
<text x="993" y="395.5" font-size="9.2" fill="#fff" text-anchor="start" textLength="27.5" lengthAdjust="spacingAndGlyphs"  stroke="#fff" stroke-width="0.3">81.815</text>
<line x1="988" y1="425.5" x2="990" y2="425.5" stroke="#fff" stroke-width="1" />
<text x="993" y="428.5" font-size="9.2" fill="#fff" text-anchor="start" textLength="27.5" lengthAdjust="spacingAndGlyphs"  stroke="#fff" stroke-width="0.3">81.790</text>
<line x1="988" y1="463.5" x2="990" y2="463.5" stroke="#fff" stroke-width="1" />
<text x="993" y="466.5" font-size="9.2" fill="#fff" text-anchor="start" textLength="27.5" lengthAdjust="spacingAndGlyphs"  stroke="#fff" stroke-width="0.3">81.760</text>
<line x1="988" y1="496.5" x2="990" y2="496.5" stroke="#fff" stroke-width="1" />
<text x="993" y="499.5" font-size="9.2" fill="#fff" text-anchor="start" textLength="27.5" lengthAdjust="spacingAndGlyphs"  stroke="#fff" stroke-width="0.3">81.735</text>
<line x1="988" y1="534.5" x2="990" y2="534.5" stroke="#fff" stroke-width="1" />
<text x="993" y="537.5" font-size="9.2" fill="#fff" text-anchor="start" textLength="27.5" lengthAdjust="spacingAndGlyphs"  stroke="#fff" stroke-width="0.3">81.705</text>
<line x1="988" y1="573.5" x2="990" y2="573.5" stroke="#fff" stroke-width="1" />
<text x="993" y="576.5" font-size="9.2" fill="#fff" text-anchor="start" textLength="27.5" lengthAdjust="spacingAndGlyphs"  stroke="#fff" stroke-width="0.3">81.675</text>
<rect x="990" y="325" width="34" height="11" fill="#fff" />
<text x="993" y="334" font-size="9.2" fill="#000" text-anchor="start" textLength="27.5" lengthAdjust="spacingAndGlyphs"  stroke="#000" stroke-width="0.3">81.863</text>
<line x1="364.5" y1="580" x2="364.5" y2="584" stroke="#fff" stroke-width="1" />
<text x="362.6" y="593" font-size="9.2" fill="#fff" text-anchor="start" textLength="49.5" lengthAdjust="spacingAndGlyphs"  stroke="#fff" stroke-width="0.3">21 Jan 2022</text>
<line x1="428.5" y1="580" x2="428.5" y2="584" stroke="#fff" stroke-width="1" />
<text x="426.6" y="593" font-size="9.2" fill="#fff" text-anchor="start" textLength="52.4" lengthAdjust="spacingAndGlyphs"  stroke="#fff" stroke-width="0.3">21 Jan 02:40</text>
<line x1="492.5" y1="580" x2="492.5" y2="584" stroke="#fff" stroke-width="1" />
<text x="490.6" y="593" font-size="9.2" fill="#fff" text-anchor="start" textLength="52.4" lengthAdjust="spacingAndGlyphs"  stroke="#fff" stroke-width="0.3">21 Jan 02:50</text>
<line x1="556.5" y1="580" x2="556.5" y2="584" stroke="#fff" stroke-width="1" />
<text x="554.6" y="593" font-size="9.2" fill="#fff" text-anchor="start" textLength="52.4" lengthAdjust="spacingAndGlyphs"  stroke="#fff" stroke-width="0.3">21 Jan 03:00</text>
<line x1="620.5" y1="580" x2="620.5" y2="584" stroke="#fff" stroke-width="1" />
<text x="618.6" y="593" font-size="9.2" fill="#fff" text-anchor="start" textLength="52.4" lengthAdjust="spacingAndGlyphs"  stroke="#fff" stroke-width="0.3">21 Jan 03:10</text>
<line x1="684.5" y1="580" x2="684.5" y2="584" stroke="#fff" stroke-width="1" />
<text x="682.6" y="593" font-size="9.2" fill="#fff" text-anchor="start" textLength="52.4" lengthAdjust="spacingAndGlyphs"  stroke="#fff" stroke-width="0.3">21 Jan 03:20</text>
<line x1="748.5" y1="580" x2="748.5" y2="584" stroke="#fff" stroke-width="1" />
<text x="746.6" y="593" font-size="9.2" fill="#fff" text-anchor="start" textLength="52.4" lengthAdjust="spacingAndGlyphs"  stroke="#fff" stroke-width="0.3">21 Jan 03:30</text>
<line x1="812.5" y1="580" x2="812.5" y2="584" stroke="#fff" stroke-width="1" />
<text x="810.6" y="593" font-size="9.2" fill="#fff" text-anchor="start" textLength="52.4" lengthAdjust="spacingAndGlyphs"  stroke="#fff" stroke-width="0.3">21 Jan 03:40</text>
<line x1="876.5" y1="580" x2="876.5" y2="584" stroke="#fff" stroke-width="1" />
<text x="874.6" y="593" font-size="9.2" fill="#fff" text-anchor="start" textLength="52.4" lengthAdjust="spacingAndGlyphs"  stroke="#fff" stroke-width="0.3">21 Jan 03:50</text>
<g fill="none" stroke="#7e7e7e" shape-rendering="auto"><circle cx="976.5" cy="563" r="2.6" fill="#7e7e7e"/><rect x="975.3" y="565" width="2.4" height="2.6" fill="#7e7e7e" stroke="none"/><path d="M972 568 l9 4.5 M981 568 l-9 4.5"/></g>
<circle cx="975.4" cy="563.6" r="0.7" fill="#000" shape-rendering="auto"/><circle cx="977.6" cy="563.6" r="0.7" fill="#000" shape-rendering="auto"/>
<line x1="0" y1="611.5" x2="1040" y2="611.5" stroke="#f8f8f8" stroke-width="1" />
<line x1="0" y1="612.5" x2="1040" y2="612.5" stroke="#f8f8f8" stroke-width="1" />
<line x1="0" y1="613.5" x2="1040" y2="613.5" stroke="#2a2a2a" stroke-width="1" />
<rect x="0" y="614" width="1040" height="19" fill="#f0f0f0" />
<rect x="0" y="611" width="15" height="20" fill="#fff" />
<line x1="15.5" y1="613" x2="15.5" y2="632" stroke="#1e1e1e" stroke-width="1" />
<line x1="0" y1="631.5" x2="16" y2="631.5" stroke="#1e1e1e" stroke-width="1" />
<line x1="0" y1="632.5" x2="17" y2="632.5" stroke="#9a9a9a" stroke-width="1" />
<line x1="16.5" y1="615" x2="16.5" y2="633" stroke="#9a9a9a" stroke-width="1" />
<text x="0" y="626" font-size="11.5" fill="#000" text-anchor="start" >5</text>
<path d="M1012 618 v8 l-4 -4 z M1026 618 v8 l4 -4 z" fill="#9a9a9a" shape-rendering="auto"/>
<line x1="0" y1="633.5" x2="1040" y2="633.5" stroke="#fff" stroke-width="1" />
<rect x="0" y="634" width="1040" height="22" fill="#f0f0f0" />
<line x1="346.5" y1="636" x2="346.5" y2="654" stroke="#8c8c8c" stroke-width="1" />
<line x1="347.5" y1="636" x2="347.5" y2="654" stroke="#fff" stroke-width="1" />
<line x1="462.5" y1="636" x2="462.5" y2="654" stroke="#8c8c8c" stroke-width="1" />
<line x1="463.5" y1="636" x2="463.5" y2="654" stroke="#fff" stroke-width="1" />
<line x1="564.5" y1="636" x2="564.5" y2="654" stroke="#8c8c8c" stroke-width="1" />
<line x1="565.5" y1="636" x2="565.5" y2="654" stroke="#fff" stroke-width="1" />
<line x1="635.5" y1="636" x2="635.5" y2="654" stroke="#8c8c8c" stroke-width="1" />
<line x1="636.5" y1="636" x2="636.5" y2="654" stroke="#fff" stroke-width="1" />
<line x1="706.5" y1="636" x2="706.5" y2="654" stroke="#8c8c8c" stroke-width="1" />
<line x1="707.5" y1="636" x2="707.5" y2="654" stroke="#fff" stroke-width="1" />
<line x1="774.5" y1="636" x2="774.5" y2="654" stroke="#8c8c8c" stroke-width="1" />
<line x1="775.5" y1="636" x2="775.5" y2="654" stroke="#fff" stroke-width="1" />
<line x1="844.5" y1="636" x2="844.5" y2="654" stroke="#8c8c8c" stroke-width="1" />
<line x1="845.5" y1="636" x2="845.5" y2="654" stroke="#fff" stroke-width="1" />
<line x1="910.5" y1="636" x2="910.5" y2="654" stroke="#8c8c8c" stroke-width="1" />
<line x1="911.5" y1="636" x2="911.5" y2="654" stroke="#fff" stroke-width="1" />
<text x="353" y="650" font-size="12" fill="#000" text-anchor="start" textLength="95" lengthAdjust="spacingAndGlyphs" >Prochargedmopar</text>
<text x="944" y="650" font-size="12" fill="#000" text-anchor="start" textLength="67" lengthAdjust="spacingAndGlyphs" >345258/56 kb</text>
<rect x="916" y="639" width="2" height="12" fill="#5c8c2a" />
<rect x="916" y="649.0" width="2" height="2.0" fill="#aa1c10" shape-rendering="auto"/>
<rect x="919" y="639" width="2" height="12" fill="#5c8c2a" />
<rect x="919" y="647.75" width="2" height="3.25" fill="#aa1c10" shape-rendering="auto"/>
<rect x="922" y="639" width="2" height="12" fill="#5c8c2a" />
<rect x="922" y="646.5" width="2" height="4.5" fill="#aa1c10" shape-rendering="auto"/>
<rect x="925" y="639" width="2" height="12" fill="#5c8c2a" />
<rect x="925" y="645.25" width="2" height="5.75" fill="#aa1c10" shape-rendering="auto"/>
<rect x="928" y="639" width="2" height="12" fill="#5c8c2a" />
<rect x="928" y="644.0" width="2" height="7.0" fill="#aa1c10" shape-rendering="auto"/>
<rect x="931" y="639" width="2" height="12" fill="#5c8c2a" />
<rect x="931" y="642.75" width="2" height="8.25" fill="#aa1c10" shape-rendering="auto"/>
<rect x="934" y="639" width="2" height="12" fill="#5c8c2a" />
<rect x="934" y="641.5" width="2" height="9.5" fill="#aa1c10" shape-rendering="auto"/>
<rect x="937" y="639" width="2" height="12" fill="#5c8c2a" />
<rect x="937" y="640.25" width="2" height="10.75" fill="#aa1c10" shape-rendering="auto"/>
<linearGradient id="tk" x1="0" y1="0" x2="1" y2="0"><stop offset="0" stop-color="#0b0b0b"/><stop offset="0.36" stop-color="#0d0d0d"/><stop offset="0.44" stop-color="#181818"/><stop offset="0.52" stop-color="#1f1f1f"/><stop offset="0.7" stop-color="#242424"/><stop offset="1" stop-color="#1d1d1d"/></linearGradient>
<rect x="0" y="656" width="1040" height="40" fill="url(#tk)" />
<g shape-rendering="auto"><path d="M520 656 L700 656 L560 696 L470 696 Z" fill="#2a2a2a" fill-opacity="0.35"/><path d="M760 656 L800 656 L700 696 L640 696 Z" fill="#000" fill-opacity="0.25"/><path d="M820 686 L1035 664 L1035 672 L860 696 L820 696 Z" fill="#000" fill-opacity="0.3"/></g>
<text x="612" y="716" font-size="46" fill="#0a0a0a" text-anchor="start" textLength="290" lengthAdjust="spacingAndGlyphs" font-style="italic" font-weight="bold" shape-rendering="auto" fill-opacity="0.6">KGALANTE</text>
<rect x="0" y="656" width="66" height="40" fill="#333333" />
<rect x="460" y="656" width="48" height="40" fill="#474747" />
<rect x="170" y="694" width="40" height="2" fill="#76b9ed" />
<rect x="219" y="694" width="40" height="2" fill="#76b9ed" />
<rect x="268" y="694" width="40" height="2" fill="#76b9ed" />
<rect x="366" y="694" width="40" height="2" fill="#76b9ed" />
<rect x="460" y="694" width="48" height="2" fill="#8ac4f0" />
<g shape-rendering="auto">
<g fill="none" stroke="#b4b4b4" stroke-width="1.1"><rect x="42.8" y="668" width="5.8" height="10.5" rx="2.6"/><path d="M40.2 675.5 a5.5 5.5 0 0 0 11 0 M45.7 681 v2.5 M43 683.7 h5.4"/></g>
<g fill="none" stroke="#fff" stroke-width="1.3"><rect x="84.3" y="669.3" width="11.6" height="13.4"/><path d="M82.3 671.3 h-1.8 v9.4 h1.8 M97.8 671.3 h1.8 v9.4 h-1.8"/></g>
<linearGradient id="scr" x1="0" y1="0" x2="1" y2="0.3"><stop offset="0" stop-color="#1430c8"/><stop offset="0.5" stop-color="#3c68e0"/><stop offset="1" stop-color="#b8d4f8"/></linearGradient>
<g><path d="M131.5 664.5 l19 1.5 l-2.2 16 l-15.3 -2.6 z" fill="#a8c0e4" stroke="#d4deec" stroke-width="0.8"/><path d="M134 667 l14.3 1.2 l-1.6 11 l-11.6 -1.8 z" fill="url(#scr)"/><path d="M139 681 l4 0.6 l-0.4 3 h-3 z" fill="#9a8a60"/><ellipse cx="141" cy="686" rx="5.5" ry="2.2" fill="#c8b078"/><circle cx="135" cy="676.5" r="4.6" fill="#a8c8ec" fill-opacity="0.88" stroke="#7888a0" stroke-width="0.9"/></g>
<g><rect x="181" y="663.5" width="18" height="24" fill="#fff"/><rect x="183" y="666" width="14" height="3.5" fill="#151515"/>
<path d="M184.0 671.5 h3.2 l-3.2 3.2 z" fill="#151515"/>
<path d="M188.8 671.5 h3.2 l-3.2 3.2 z" fill="#151515"/>
<path d="M193.6 671.5 h3.2 l-3.2 3.2 z" fill="#151515"/>
<path d="M184.0 676.5 h3.2 l-3.2 3.2 z" fill="#151515"/>
<path d="M188.8 676.5 h3.2 l-3.2 3.2 z" fill="#151515"/>
<path d="M193.6 676.5 h3.2 l-3.2 3.2 z" fill="#151515"/>
<path d="M184.0 681.5 h3.2 l-3.2 3.2 z" fill="#151515"/>
<path d="M188.8 681.5 h3.2 l-3.2 3.2 z" fill="#151515"/>
<path d="M193.6 681.5 h3.2 l-3.2 3.2 z" fill="#151515"/>
</g>
<path d="M230 667 h18 v18 h-18 z" fill="#fff"/><path d="M247 675.8 v8.4 h-8.4 z" fill="#101010"/>
<g><path d="M277 667 h7 l2 2 h11 v16 h-20 z" fill="#f7d46a"/><path d="M277 671 h20 v14 h-20 z" fill="#fbe38e"/><path d="M281 678 h12 v7 h-3.5 v-3 h-5 v3 h-3.5 z" fill="#3a9ae0"/></g>
<circle cx="337" cy="676" r="11" fill="#2a9fdc"/><path d="M331 676 l12 -5 l-2 11 l-4 -3 l-2 2 v-3.5 l6 -5 l-7 4.5 z" fill="#fff"/>
<circle cx="386" cy="676" r="11" fill="#e04a3a"/><path d="M386 676 L376.5 670.5 A11 11 0 0 0 380.5 685.5 Z" fill="#2ea050"/><path d="M386 676 L380.5 685.5 A11 11 0 0 0 397 676 Z" fill="#f6c62c"/><path d="M386 676 L397 676 A11 11 0 0 0 376.5 670.5 Z" fill="#e04a3a"/><circle cx="386" cy="676" r="5" fill="#fff"/><circle cx="386" cy="676" r="4" fill="#4a8af0"/>
<ellipse cx="435.5" cy="675.5" rx="11" ry="6.5" fill="#e69a9a" transform="rotate(-22 435.5 675.5)"/><ellipse cx="435.5" cy="673.7" rx="10.5" ry="6.2" fill="#f6f2f2" stroke="#d84848" stroke-width="1.4" transform="rotate(-22 435.5 673.7)"/><path d="M431.5 667.5 l8 12 M437 666.5 l1.5 13" stroke="#50586a" stroke-width="1" fill="none"/><ellipse cx="442.3" cy="682" rx="1.8" ry="2.8" fill="none" stroke="#2a8ad8" stroke-width="1.5" transform="rotate(-35 442.3 682)"/><ellipse cx="437.8" cy="683.6" rx="1.8" ry="2.8" fill="none" stroke="#2a8ad8" stroke-width="1.5" transform="rotate(10 437.8 683.6)"/>
<rect x="476.5" y="667" width="17" height="13" fill="#e4eefb" stroke="#7aa0d8"/><rect x="477" y="667.5" width="16" height="2" fill="#5a90e0"/><rect x="484.5" y="672.5" width="10" height="10" fill="#f2f7ff" stroke="#7aa0d8"/><path d="M486 679 l2 -3 l1.5 2 l2 -3.5 l1.5 2" stroke="#6a90d0" stroke-width="0.8" fill="none"/><circle cx="478.8" cy="675.3" r="3" fill="#f0b070"/><path d="M476 673.6 q2.8 -3.4 5.6 0 q-2.8 -1 -5.6 0 z" fill="#d8701c"/><path d="M473.6 686 q0.4 -7 5.2 -7 q4.8 0 5.2 7 z" fill="#4aa83c"/><path d="M477.6 679.5 l1.2 2.5 l1.2 -2.5 z" fill="#eef6ee"/>
<path d="M834 679 l5.5 -5.5 l5.5 5.5" fill="none" stroke="#fff" stroke-width="1.3"/>
<g fill="none" stroke="#fff" stroke-width="1.2"><rect x="859.5" y="672.8" width="11" height="7.8"/><rect x="861" y="674.3" width="7" height="4.8" fill="#fff" stroke="none"/><path d="M856 669.8 v3 M858.5 669.8 v3 M855 672.8 h4.5 v3 q-2.2 2 -4.5 0 z M857.2 677 v3.5 h2" fill="#fff" stroke-width="0.8"/></g>
<g fill="none" stroke="#d8d8d8" stroke-width="1.2"><path d="M883 682 a11 11 0 0 1 11 -11 M886 682 a8 8 0 0 1 8 -8 M889 682 a5 5 0 0 1 5 -5"/><circle cx="893" cy="681" r="1.3" fill="#fff" stroke="none"/></g>
<g fill="none" stroke="#fff" stroke-width="1.2"><path d="M904 673.5 h3 l4 -3.5 v12 l-4 -3.5 h-3 z"/><path d="M913.5 673 a4 4 0 0 1 0 6 M915.5 670.5 a7 7 0 0 1 0 11 M917.5 668.5 a10 10 0 0 1 0 15" stroke-width="1"/></g>
</g>
<text x="955" y="671" font-size="12" fill="#fff" text-anchor="middle" textLength="41" lengthAdjust="spacingAndGlyphs" >7:52 PM</text>
<text x="955.5" y="688" font-size="12" fill="#fff" text-anchor="middle" textLength="51" lengthAdjust="spacingAndGlyphs" >1/20/2022</text>
<g shape-rendering="auto"><path d="M999 668 h17 v13 h-10 l-4 4 v-4 h-3 z" fill="#fff"/><path d="M1002 671.5 h11 M1002 674.5 h11 M1002 677.5 h7" stroke="#151515" stroke-width="1"/><circle cx="1014" cy="683.5" r="6.5" fill="#2a2a2a" stroke="#e0e0e0" stroke-width="1"/></g>
<text x="1014" y="687.5" font-size="10.5" fill="#fff" text-anchor="middle" font-weight="bold">2</text>
<line x1="1035.5" y1="656" x2="1035.5" y2="696" stroke="#5a5a5a" stroke-width="1" />
</svg>
</body></html>
